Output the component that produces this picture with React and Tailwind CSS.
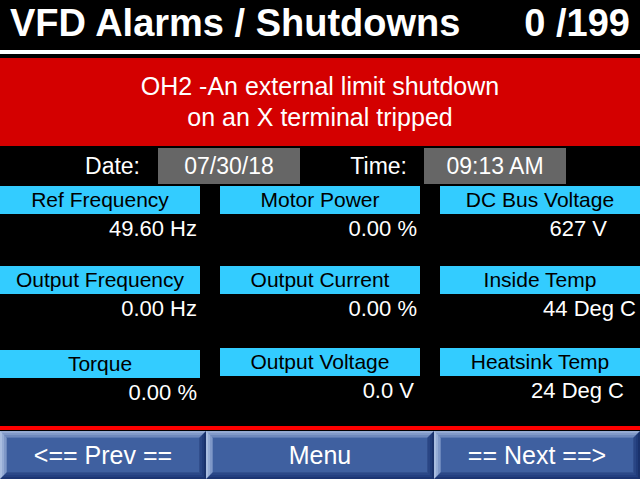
import React from "react";

const cells = [
  { label: "Ref Frequency", value: "49.60 Hz", pr: "pr-[3px]" },
  { label: "Motor Power", value: "0.00 %", pr: "pr-[3px]" },
  { label: "DC Bus Voltage", value: "627 V", pr: "pr-[33px]" },
  { label: "Output Frequency", value: "0.00 Hz", pr: "pr-[3px]" },
  { label: "Output Current", value: "0.00 %", pr: "pr-[3px]" },
  { label: "Inside Temp", value: "44 Deg C", pr: "pr-[4px]" },
  { label: "Torque", value: "0.00 %", pr: "pr-[3px]", shift: true },
  { label: "Output Voltage", value: "0.0 V", pr: "pr-[6px]" },
  { label: "Heatsink Temp", value: "24 Deg C", pr: "pr-[16px]" },
];

function BevelButton({ label, width }) {
  return (
    <div className={`${width} h-[48px] border-2 border-t-[#94aad3] border-l-[#a9bde0] border-b-[#1c3572] border-r-[#1a326c]`}>
      <div className="h-full border-2 border-t-[#8199c8] border-l-[#95acd5] border-b-[#233f80] border-r-[#213c7a]">
        <div className="h-full border-2 border-t-[#6e89bd] border-l-[#7f98c8] border-b-[#2b4888] border-r-[#294584]">
          <div className="h-full border-[1px] border-t-[#5a78b2] border-l-[#6a86bb] border-b-[#33518f] border-r-[#314e8c] bg-[#3f60a0] flex items-center justify-center text-white text-[25px] leading-none">
            {label}
          </div>
        </div>
      </div>
    </div>
  );
}

export default function App() {
  return (
    <div className="w-[640px] h-[479px] bg-black overflow-hidden flex flex-col" style={{ fontFamily: '"Liberation Sans", Arial, sans-serif' }}>
      <header className="h-[50px] flex justify-between items-start px-[10px] text-white font-bold text-[38px] leading-[46px]">
        <span>VFD Alarms / Shutdowns</span>
        <span>0 /199</span>
      </header>
      <div className="h-[4px] bg-white mb-[4px]" />

      <section className="h-[88px] bg-[#d40000] flex flex-col items-center justify-center text-white text-[25px] leading-[31px]">
        <div>OH2 -An external limit shutdown</div>
        <div>on an X terminal tripped</div>
      </section>

      <div className="h-[40px] flex items-center text-white text-[23px]">
        <div className="w-[158px] text-right pr-[18px]">Date:</div>
        <div className="w-[142px] h-[36px] bg-[#666666] flex items-center justify-center">07/30/18</div>
        <div className="w-[124px] text-right pr-[17px]">Time:</div>
        <div className="w-[142px] h-[36px] bg-[#666666] flex items-center justify-center">09:13 AM</div>
      </div>

      <main className="grid grid-cols-[200px_200px_200px] grid-rows-[80px_82px_58px] gap-x-[20px]">
        {cells.map((c) => (
          <div key={c.label} className={c.shift ? "pt-[2px]" : ""}>
            <div className="h-[28px] bg-[#33ccff] text-black text-center text-[21px] leading-[28px]">{c.label}</div>
            <div className={`mt-[2px] text-white text-right text-[22px] leading-[26px] ${c.pr}`}>{c.value}</div>
          </div>
        ))}
      </main>

      <div className="mt-auto h-[4px] bg-[#ff0000] mb-[1px]" />
      <footer className="flex">
        <BevelButton label="<== Prev ==" width="w-[206px]" />
        <BevelButton label="Menu" width="w-[228px]" />
        <BevelButton label="== Next ==>" width="flex-1" />
      </footer>
    </div>
  );
}
